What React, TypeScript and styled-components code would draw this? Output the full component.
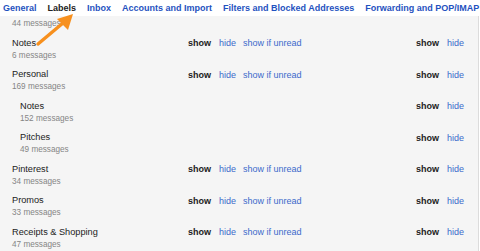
import React from 'react';
import styled, { createGlobalStyle } from 'styled-components';

const GlobalStyle = createGlobalStyle`
  html, body {
    margin: 0;
    padding: 0;
    background: #ffffff;
    overflow: hidden;
  }
  body {
    font-family: "Liberation Sans", Arial, sans-serif;
  }
`;

const Page = styled.div`
  position: relative;
  width: 480px;
  height: 251px;
  overflow: hidden;
`;

const TabBar = styled.div`
  display: flex;
  height: 16px;
  align-items: center;
  padding-left: 3px;
  gap: 11px;
  background: #ffffff;
  white-space: nowrap;
`;

const Tab = styled.span<{ $active?: boolean }>`
  font-size: 9px;
  font-weight: bold;
  line-height: 16px;
  color: ${(p) => (p.$active ? '#222222' : '#1f52c0')};
`;

const Content = styled.div`
  width: 478px;
  background: #f5f5f5;
  border-right: 1px solid #dcdcdc;
  border-bottom: 1px solid #dcdcdc;
`;

const Row = styled.div<{ $indent?: boolean }>`
  display: grid;
  grid-template-columns: ${(p) => (p.$indent ? '168px' : '176px')} 228px 1fr;
  padding: 4px 0 2.5px ${(p) => (p.$indent ? '20px' : '12px')};
`;

const Partial = styled.div`
  padding: 2px 0 2.5px 12px;
`;

const Name = styled.div`
  font-size: 9.2px;
  line-height: 13px;
  color: #222222;
`;

const Count = styled.div`
  font-size: 8.2px;
  line-height: 12px;
  color: #858585;
`;

const Actions = styled.div`
  display: flex;
  align-items: center;
  height: 13px;
  white-space: nowrap;
`;

const Show = styled.span`
  font-size: 9px;
  font-weight: bold;
  color: #222222;
  margin-right: 8px;
`;

const Link = styled.span`
  font-size: 9px;
  color: #3c6acb;
  margin-right: 7px;
`;

const Arrow = styled.svg`
  position: absolute;
  left: 0;
  top: 0;
  pointer-events: none;
`;

type Label = {
  name: string;
  count: number;
  indent?: boolean;
  unread: boolean;
};

const labels: Label[] = [
  { name: 'Notes', count: 6, unread: true },
  { name: 'Personal', count: 169, unread: true },
  { name: 'Notes', count: 152, indent: true, unread: false },
  { name: 'Pitches', count: 49, indent: true, unread: false },
  { name: 'Pinterest', count: 34, unread: true },
  { name: 'Promos', count: 33, unread: true },
  { name: 'Receipts & Shopping', count: 47, unread: true },
];

const tabs = [
  'General',
  'Labels',
  'Inbox',
  'Accounts and Import',
  'Filters and Blocked Addresses',
  'Forwarding and POP/IMAP',
];

export default function App() {
  return (
    <Page>
      <GlobalStyle />
      <TabBar>
        {tabs.map((t) => (
          <Tab key={t} $active={t === 'Labels'}>
            {t}
          </Tab>
        ))}
      </TabBar>
      <Content>
        <Partial>
          <Count>44 messages</Count>
        </Partial>
        {labels.map((l, i) => (
          <Row key={i} $indent={l.indent}>
            <div>
              <Name>{l.name}</Name>
              <Count>{l.count} messages</Count>
            </div>
            <Actions>
              {!l.indent && (
                <>
                  <Show>show</Show>
                  <Link>hide</Link>
                  {l.unread && <Link>show if unread</Link>}
                </>
              )}
            </Actions>
            <Actions>
              <Show>show</Show>
              <Link>hide</Link>
            </Actions>
          </Row>
        ))}
      </Content>
      <Arrow width="480" height="251" viewBox="0 0 480 251">
        <line x1="38" y1="44" x2="63" y2="23" stroke="#f7901e" strokeWidth="3.4" strokeLinecap="round" />
        <polygon points="73,14 57,19 68,30" fill="#f7901e" />
      </Arrow>
    </Page>
  );
}
